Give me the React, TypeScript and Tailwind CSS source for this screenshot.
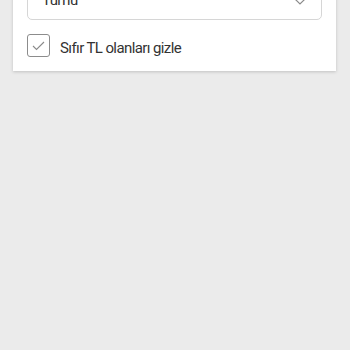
import React, { useState } from 'react';

const App: React.FC = () => {
  const [hideZero, setHideZero] = useState(true);

  return (
    <div className="h-[350px] w-[350px] overflow-hidden bg-[#ebebeb]" style={{ fontFamily: 'Roboto, "Liberation Sans", sans-serif' }}>
      <div className="mx-[13px] mt-[-32px] w-[323px] bg-white px-[14px] pb-[14px] pt-[12px] shadow-[0_1px_3px_rgba(0,0,0,0.18)]">
        {/* Select */}
        <div className="flex h-10 items-center justify-between rounded-[5px] border border-[#d6d6d6] pl-[14px] pr-[14px]">
          <span className="text-[15px] tracking-[-0.6px] text-[#333]">Tümü</span>
          <svg width="14" height="8" viewBox="0 0 14 8" fill="none" className="mt-[2px]">
            <path d="M1 1l6 6 6-6" stroke="#8a8a8a" strokeWidth="1.2" />
          </svg>
        </div>

        {/* Checkbox row */}
        <label className="mt-[14px] flex h-[23px] cursor-pointer items-center gap-[10px]">
          <button
            type="button"
            onClick={() => setHideZero(!hideZero)}
            className="flex h-[23px] w-[23px] items-center justify-center rounded-[3px] border border-[#8c8c8c] bg-white"
          >
            {hideZero && (
              <svg width="13" height="10" viewBox="0 0 13 10" fill="none">
                <path d="M1 5l3.5 3.5L12 1" stroke="#8a8a8a" strokeWidth="1.1" />
              </svg>
            )}
          </button>
          <span className="pt-[4px] text-[15px] leading-[18px] tracking-[-0.6px] text-[#333]">Sıfır TL olanları gizle</span>
        </label>
      </div>
    </div>
  );
};

export default App;
